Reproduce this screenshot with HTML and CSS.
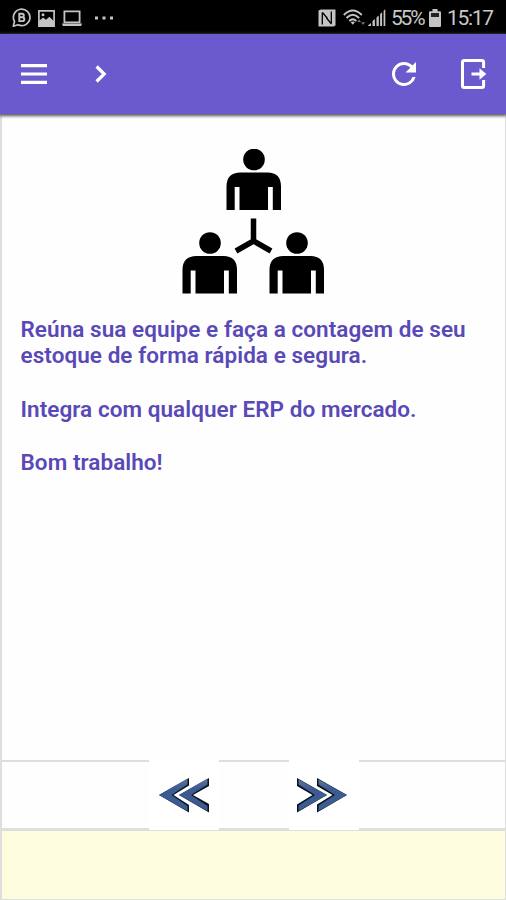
FILE: index.html
```html
<!DOCTYPE html>
<html lang="pt-BR">
<head>
  <meta charset="UTF-8" />
  <meta name="viewport" content="width=device-width, initial-scale=1.0" />
  <title>Contagem de Estoque</title>
  <link rel="stylesheet" href="styles.css">
</head>
<body>
  <div class="status-bar">
    <div class="status-left">
      <svg width="20" height="20" viewBox="0 0 20 20" fill="none" stroke="#c4c4c4" stroke-width="1.7">
        <path d="M1.3 18.2L2.5 13.500A8.300 8.300 0 1 1 6 16.800Z" stroke-linejoin="round" />
        <path d="M7.300 5.700h2.700a1.700 1.700 0 0 1 0 3.600H7.300zM7.300 9.300h3.100a1.900 1.900 0 0 1 0 3.800H7.300z" stroke-width="1.900" />
      </svg>
      <svg class="icon-image" width="17" height="17" viewBox="0 0 17 17">
        <path d="M.9.9h15.2v15.2H.9z" fill="none" stroke="#c4c4c4" stroke-width="1.7" />
        <path d="M1 11l4-3.500 3 2.300 3.400-3 4.600 4.400V16H1z" fill="#c4c4c4" />
        <circle cx="5" cy="4.700" r="1.500" fill="#c4c4c4" />
      </svg>
      <svg class="icon-laptop" width="22" height="17" viewBox="0 0 22 17">
        <path d="M3.400 1.300h15.200v11H3.400z" fill="none" stroke="#c4c4c4" stroke-width="1.800" />
        <path d="M.8 13.600h20.400l-1.200 2.500H2z" fill="#c4c4c4" />
      </svg>
      <svg class="icon-dots" width="18" height="4" viewBox="0 0 18 4" fill="#c4c4c4">
        <path d="M0 .5h3v3H0zM7.500.5h3v3h-3zM15 .5h3v3h-3z" />
      </svg>
    </div>
    <div class="status-right">
      <svg width="18" height="18" viewBox="0 0 18 18">
        <path d="M.5 1.500L3 .5h14.500v16l-2 1H.5z" fill="#c4c4c4" />
        <path d="M4.300 15.500V3.500M13.300 14V2.500" fill="none" stroke="#000" stroke-width="1.300" />
        <path d="M4.500 3.500l5 6M8.500 9l5 6" fill="none" stroke="#000" stroke-width="1.300" />
      </svg>
      <svg class="icon-wifi" width="23" height="18" viewBox="0 0 23 18" fill="none" stroke="#c4c4c4" stroke-width="1.900">
        <path d="M.8 6Q9.800-3 18.800 6M3.500 9Q9.800 2.500 16.100 9M6.300 12Q9.800 8.400 13.300 12" />
        <path d="M7.700 13.300q2.100-1.400 4.200 0l-2.100 2.500z" fill="#c4c4c4" stroke="none" />
        <path d="M14.200 13l2-2.600 1.800 2.600zM18 13.200h4l-2 2.800z" fill="#777" stroke="none" />
      </svg>
      <svg class="icon-signal" width="18" height="18" viewBox="0 0 18 18" fill="#c4c4c4">
        <path d="M0 16.500l3-2.500v3H0zM4.500 12l2.400-2v7H4.500zM8.500 8.600l2.300-2V17H8.500zM12.100 5l2-1.700V17h-2zM15.600 1.800l1.700-1.500V17h-1.700z" />
      </svg>
      <span class="battery-level">55%</span>
      <svg class="icon-battery" width="12" height="18" viewBox="0 0 12 18">
        <path d="M3.500 0h5v2.200H11q1 0 1 1V17q0 1-1 1H1q-1 0-1-1V3.200q0-1 1-1h2.500z" fill="#c4c4c4" />
        <path d="M2 4h8v4H2z" fill="#222" />
      </svg>
      <span class="clock">15:17</span>
    </div>
  </div>

  <div class="toolbar">
    <button class="btn-menu" aria-label="Menu">
      <svg width="26" height="20" viewBox="0 0 26 20" fill="#fff">
        <path d="M0 0h26v3.300H0zM0 8.400h26v3.200H0zM0 16.700h26V20H0z" />
      </svg>
    </button>
    <button class="btn-next" aria-label="Avançar">
      <svg width="12" height="18" viewBox="0 0 12 18" fill="none" stroke="#fff" stroke-width="3.200">
        <path d="M1.600 1.500L9.200 9l-7.600 7.500" />
      </svg>
    </button>
    <button class="btn-refresh" aria-label="Atualizar">
      <svg width="24" height="24" viewBox="4 4 16 16" fill="#fff">
        <path d="M17.650 6.350A7.960 7.960 0 0 0 12 4a8 8 0 1 0 7.730 10h-2.080A6 6 0 1 1 12 6c1.660 0 3.140.69 4.220 1.780L13 11h7V4z" />
      </svg>
    </button>
    <button class="btn-exit" aria-label="Sair">
      <svg width="26" height="30" viewBox="0 0 26 30">
        <path d="M22.600 9V3.200q0-1.700-1.700-1.700H3.200q-1.700 0-1.700 1.700v23.600q0 1.700 1.700 1.700h17.700q1.700 0 1.700-1.700V21" fill="none" stroke="#fff" stroke-width="3" />
        <path d="M10.500 13.400h8V9.300l6.800 5.700-6.800 5.700v-4.100h-8z" fill="#fff" />
      </svg>
    </button>
  </div>

  <div class="content">
    <svg class="team" width="144" height="146" viewBox="0 0 144 146">
      <defs>
        <g id="person">
          <circle cx="27.500" cy="11" r="10.800" />
          <path d="M0 61.500V38Q0 24 14 24H41Q54.500 24 54.500 38V61.500H46.300V38.500H41.500V61.500H13V38.500H8.200V61.500Z" />
        </g>
      </defs>
      <use href="#person" x="44.500" y="-0.500" />
      <use href="#person" x="0.500" y="83" />
      <use href="#person" x="87.500" y="83" />
      <path d="M71.500 69.500V92M54 102l17.500-10L89 102" fill="none" stroke="#000" stroke-width="5.500" />
    </svg>
    <div class="message">
      <p>Reúna sua equipe e faça a contagem de seu<br>estoque de forma rápida e segura.</p>
      <p>Integra com qualquer ERP do mercado.</p>
      <p>Bom trabalho!</p>
    </div>
  </div>

  <div class="pager">
    <button class="pager-btn" aria-label="Anterior">
      <svg class="arrow-prev" width="52" height="36" viewBox="0 0 52 36">
        <defs>
          <linearGradient id="blue" x1="0" y1="0" x2="0" y2="1">
            <stop offset="0" stop-color="#61779c" />
            <stop offset="0.300" stop-color="#3c5b91" />
            <stop offset="1" stop-color="#3c5b91" />
          </linearGradient>
        </defs>
        <path d="M31 1v7.500L15.500 18 31 28v7.500L1 18Z" fill="#071321" />
        <path d="M29.500 1.500v6L13.500 18l16 11v5L1 18Z" fill="url(#blue)" />
        <path d="M51 1v8L35 18l16 9v8.500L21 18Z" fill="#071321" stroke="#fff" stroke-width="1.500" paint-order="stroke" />
        <path d="M49.500 1.500v6L33 18l16.500 11v5L21 18Z" fill="url(#blue)" />
      </svg>
    </button>
    <button class="pager-btn" aria-label="Próximo">
      <svg class="arrow-next" width="52" height="36" viewBox="0 0 52 36">
        <path d="M21 1v8l15.500 9L21 27.500v8L51 18Z" fill="#071321" />
        <path d="M22.500 2.500v5L39 18l-16.500 10.500v5.500L51 18Z" fill="url(#blue)" />
        <path d="M1 1v8l15.500 9L1 27.500v8L31 18Z" fill="#071321" stroke="#fff" stroke-width="1.500" paint-order="stroke" />
        <path d="M2.500 2.500v5L19 18 2.500 28.500v5.500L31 18Z" fill="url(#blue)" />
      </svg>
    </button>
  </div>

  <div class="footer"></div>
</body>
</html>
```
FILE: styles.css
```css
* {
  box-sizing: border-box;
}

body {
  margin: 0;
  height: 900px;
  display: flex;
  flex-direction: column;
  font-family: Roboto, sans-serif;
  background-color: #fefefe;
  overflow: hidden;
}

svg {
  display: block;
}

button {
  border: none;
  padding: 0;
  background: none;
  cursor: pointer;
}

.status-bar {
  height: 34px;
  padding: 2px 13px 0 12px;
  display: flex;
  justify-content: space-between;
  background: #000;
  color: #c8c8c8;
  font-size: 21px;
}

.status-left,
.status-right {
  display: flex;
  align-items: center;
}

.icon-image {
  margin-left: 6px;
}

.icon-laptop {
  margin-left: 6px;
}

.icon-dots {
  margin-left: 12px;
}

.icon-wifi {
  margin-left: 7px;
}

.icon-signal {
  margin-left: 2px;
}

.battery-level {
  width: 34px;
  margin-left: 5px;
  letter-spacing: -2.2px;
}

.icon-battery {
  margin-left: 4px;
}

.clock {
  width: 46px;
  margin-left: 6px;
  letter-spacing: -1.3px;
}

.toolbar {
  position: relative;
  height: 80px;
  padding: 0 19px 0 21px;
  display: flex;
  align-items: center;
  background: #6a5acd;
  box-shadow: 0 1px 3px 1px #555;
}

.btn-next {
  margin-left: 48px;
}

.btn-refresh {
  margin-left: auto;
}

.btn-exit {
  margin-left: 45px;
}

.content {
  flex: 1;
  padding: 35px 18px 0 18.5px;
  border-left: 2px solid #dedede;
  border-right: 1px solid #dedede;
}

.team {
  margin: 0 auto;
}

.message {
  margin-top: 20.5px;
  color: #5949b7;
  font-size: 22.5px;
  font-weight: 600;
  line-height: 26.7px;
  letter-spacing: 0.06px;
  white-space: nowrap;
}

.message p {
  margin: 0 0 26.7px;
}

.pager {
  height: 71px;
  display: flex;
  justify-content: center;
  gap: 70px;
  border: solid #dedede;
  border-width: 2px 1px 3px 2px;
}

/* the buttons cover the lines above and below the bar */
.pager-btn {
  width: 70px;
  height: 70px;
  margin-top: -2px;
  display: flex;
  align-items: center;
  justify-content: center;
  background: #fff;
}

.arrow-prev {
  margin-left: 1px;
}

.arrow-next {
  margin-right: 3px;
}

.footer {
  height: 69px;
  background: #fefcdf;
  border: solid #dedede;
  border-width: 0 1px 1px 2px;
}
```
